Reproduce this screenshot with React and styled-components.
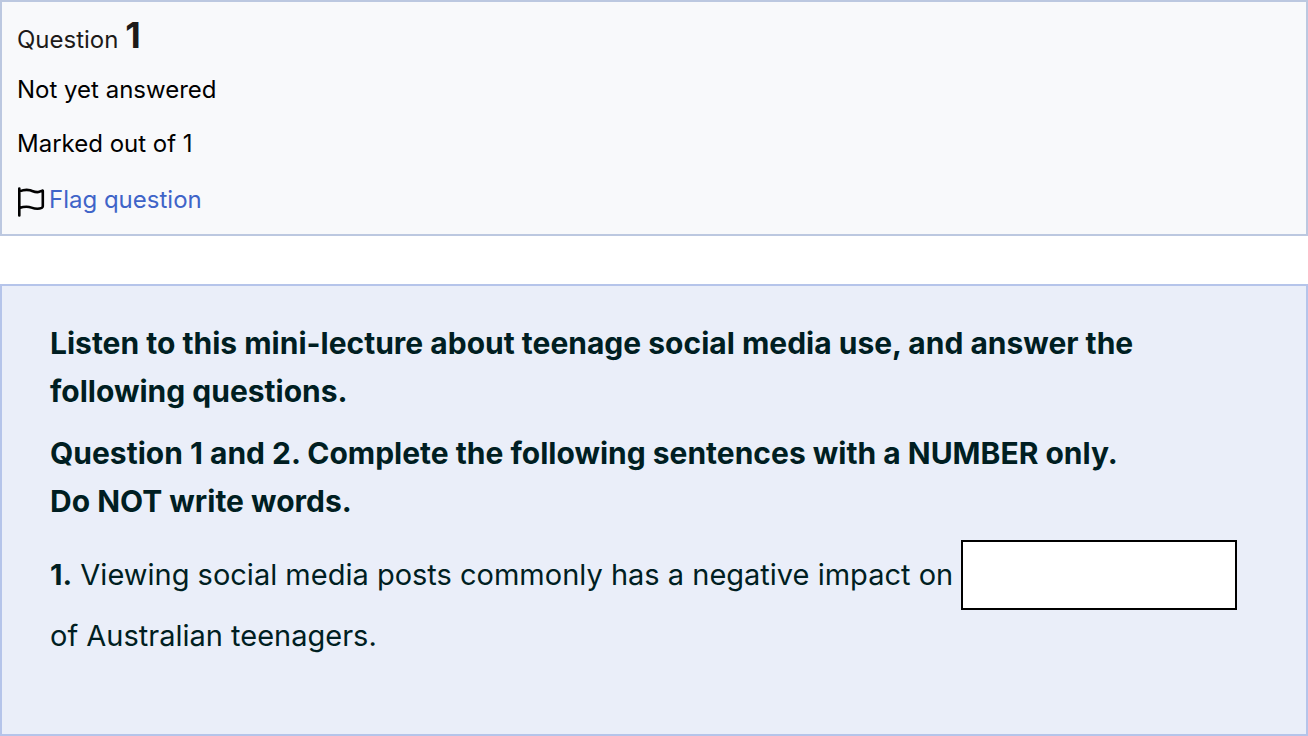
import styled, { createGlobalStyle } from "styled-components";

const GlobalStyle = createGlobalStyle`
  * {
    box-sizing: border-box;
  }
  body {
    margin: 0;
    background: #ffffff;
    font-family: Inter, "Liberation Sans", sans-serif;
  }
`;

export default function App() {
  return (
    <>
      <GlobalStyle />
      <Page>
        <InfoPanel>
          <QuestionTitle>
            Question <QuestionNumber>1</QuestionNumber>
          </QuestionTitle>
          <InfoText>Not yet answered</InfoText>
          <InfoText>Marked out of 1</InfoText>
          <FlagLink href="#flag">
            <FlagIcon />
            Flag question
          </FlagLink>
        </InfoPanel>
        <QuestionPanel>
          <Instruction>
            Listen to this mini-lecture about teenage social media use, and
            answer the following questions.
          </Instruction>
          <Instruction>
            Question 1 and 2. Complete the following sentences with a NUMBER
            only.
            <br />
            Do NOT write words.
          </Instruction>
          <Sentence>
            <b>1.</b> Viewing social media posts commonly has a negative impact
            on <AnswerInput type="text" aria-label="Answer 1" /> of Australian
            teenagers.
          </Sentence>
        </QuestionPanel>
      </Page>
    </>
  );
}

function FlagIcon() {
  return (
    <svg width="28" height="36" viewBox="0 0 28 36" fill="none" aria-hidden="true">
      <path
        d="M2.3 6.5V33.5M2.3 9.4C5.5 8.2 9.5 7.4 13 8.3C16 9.2 18.5 10.6 21.5 10L25.4 8.6C25.7 8.5 25.8 8.7 25.8 9V24.3C25.8 25 25.4 25.5 24.7 25.9C21.5 27.4 18.5 27.1 14.5 25.6C10.5 24.1 6.5 24.6 2.3 26"
        stroke="#000000"
        strokeWidth="2.6"
        strokeLinecap="round"
        strokeLinejoin="round"
      />
    </svg>
  );
}

const Page = styled.main`
  display: flex;
  flex-direction: column;
  gap: 48px;
`;

const InfoPanel = styled.section`
  padding: 12px 15px 16px;
  border: 2px solid #bcc8e0;
  background: #f8f9fb;
  color: #000000;
  font-size: 24px;
`;

const QuestionTitle = styled.h3`
  margin: 0 0 11px;
  color: #1d1a19;
  font-size: 24px;
  font-weight: 400;
  line-height: 42px;
`;

const QuestionNumber = styled.span`
  font-size: 36px;
  font-weight: 700;
`;

const InfoText = styled.p`
  margin: 0 0 18px;
  line-height: 36px;
`;

const FlagLink = styled.a`
  display: flex;
  align-items: center;
  gap: 4px;
  margin-top: 20px;
  color: #3f64c8;
  line-height: 36px;
  text-decoration: none;
`;

const QuestionPanel = styled.section`
  padding: 33px 48px 77px;
  border: 2px solid #b5c4ea;
  background: #eaeef9;
  color: #001e22;
  font-size: 30px;
`;

const Instruction = styled.p`
  margin: 0 0 14px;
  font-weight: 700;
  line-height: 48px;
`;

const Sentence = styled.p`
  margin: 0;
  font-size: 29px;
  line-height: 42px;
`;

const AnswerInput = styled.input`
  width: 276px;
  height: 70px;
  margin: 1px 0 5px;
  padding: 0 12px;
  border: 2px solid #000000;
  border-radius: 0;
  background: #ffffff;
  color: inherit;
  font: inherit;
  vertical-align: middle;
`;
